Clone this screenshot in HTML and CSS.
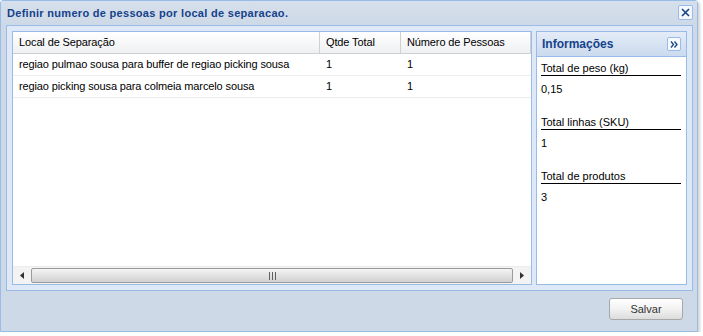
FILE: index.html
```html
<!DOCTYPE html>
<html>
<head>
<meta charset="utf-8">
<link rel="stylesheet" href="styles.css">
</head>
<body>
<div class="window">
  <div class="titlebar">
    <span class="title">Definir numero de pessoas por local de separacao.</span>
    <span class="close"><svg width="9" height="9" viewBox="0 0 9 9"><path d="M1 1L8 8M8 1L1 8" stroke="#15428b" stroke-width="1.6"/></svg></span>
  </div>
  <div class="frame">
    <div class="grid">
      <div class="ghead">
        <div class="c c1">Local de Separação</div>
        <div class="c c2">Qtde Total</div>
        <div class="c c3">Número de Pessoas</div>
      </div>
      <div class="gbody">
        <div class="row">
          <div class="c c1">regiao pulmao sousa para buffer de regiao picking sousa</div>
          <div class="c c2">1</div>
          <div class="c c3">1</div>
        </div>
        <div class="row">
          <div class="c c1">regiao picking sousa para colmeia marcelo sousa</div>
          <div class="c c2">1</div>
          <div class="c c3">1</div>
        </div>
      </div>
      <div class="hscroll">
        <div class="arrow"><svg width="4" height="7" viewBox="0 0 4 7"><path d="M4 0L0 3.5L4 7Z" fill="#333"/></svg></div>
        <div class="thumb"><span class="grip"></span></div>
        <div class="arrow"><svg width="4" height="7" viewBox="0 0 4 7"><path d="M0 0L4 3.5L0 7Z" fill="#333"/></svg></div>
      </div>
    </div>
    <div class="info">
      <div class="ihead">
        <span class="ititle">Informações</span>
        <span class="collapse"><svg width="8" height="7" viewBox="0 0 8 7"><path d="M1 0.5L3.5 3.5L1 6.5M4.5 0.5L7 3.5L4.5 6.5" fill="none" stroke="#15428b" stroke-width="1.3"/></svg></span>
      </div>
      <div class="ibody">
        <div class="field">
          <div class="label">Total de peso (kg)</div>
          <div class="value">0,15</div>
        </div>
        <div class="field">
          <div class="label">Total linhas (SKU)</div>
          <div class="value">1</div>
        </div>
        <div class="field">
          <div class="label">Total de produtos</div>
          <div class="value">3</div>
        </div>
      </div>
    </div>
  </div>
  <div class="footer">
    <button class="btn">Salvar</button>
  </div>
</div>
</body>
</html>
```
FILE: styles.css
```css
html, body {
  margin: 0;
  padding: 0;
  background: #ffffff;
}
body {
  font-family: "Liberation Sans", Arial, sans-serif;
  font-size: 11px;
  color: #000;
}
.window {
  width: 696px;
  height: 330px;
  border: 1px solid #99bbe8;
  border-radius: 3px 3px 0 0;
  background: #ced9e7;
  box-shadow: 2px 2px 3px rgba(0,0,0,0.18);
  display: flex;
  flex-direction: column;
}
.titlebar {
  height: 24px;
  display: flex;
  align-items: center;
  justify-content: space-between;
  padding: 0 4px 0 6px;
  background: linear-gradient(#d6e0ec, #ced9e7);
}
.title {
  font-weight: bold;
  color: #15428b;
  font-size: 11px;
  letter-spacing: 0.3px;
}
.close {
  width: 13px;
  height: 13px;
  border: 1px solid #99bbe8;
  border-radius: 2px;
  background: #f4f7fb;
  display: flex;
  align-items: center;
  justify-content: center;
  margin-top: -2px;
}
.frame {
  margin: 0 4px 0 5px;
  height: 254px;
  border: 1px solid #99bbe8;
  background: #dfe8f6;
  padding: 5px;
  display: flex;
  gap: 4px;
}
.grid {
  width: 518px;
  border: 1px solid #99bbe8;
  background: #fff;
  display: flex;
  flex-direction: column;
}
.ghead {
  display: flex;
  height: 21px;
  background: linear-gradient(#ffffff, #eff0f2);
  border-bottom: 1px solid #d0d0d0;
}
.ghead .c {
  border-right: 1px solid #d0d0d0;
  line-height: 21px;
}
.c {
  padding-left: 6px;
  box-sizing: border-box;
  white-space: nowrap;
  overflow: hidden;
  color: #000;
  letter-spacing: -0.12px;
}
.c1 { width: 307px; }
.c2 { width: 81px; }
.c3 { width: 130px; }
.gbody {
  flex: 1;
}
.row {
  display: flex;
  height: 21px;
  line-height: 20px;
  border-bottom: 1px solid #ededed;
}
.hscroll {
  height: 17px;
  display: flex;
  align-items: stretch;
  background: #f3f3f3;
  border-top: 1px solid #ececec;
}
.arrow {
  width: 18px;
  display: flex;
  align-items: center;
  justify-content: center;
}
.thumb {
  flex: 1;
  border: 1px solid #9a9a9a;
  border-radius: 2px;
  margin: 1px 0;
  background: linear-gradient(#f4f4f4, #e2e2e2 50%, #d2d2d2);
  display: flex;
  align-items: center;
  justify-content: center;
}
.grip {
  width: 7px;
  height: 8px;
  background: repeating-linear-gradient(90deg, #606060 0 1px, transparent 1px 3px);
}
.info {
  width: 150px;
  border: 1px solid #99bbe8;
  background: #fff;
  display: flex;
  flex-direction: column;
}
.ihead {
  height: 24px;
  display: flex;
  align-items: center;
  justify-content: space-between;
  padding: 0 5px 0 5px;
  background: linear-gradient(#e4ecf7, #cbdaee);
  border-bottom: 1px solid #99bbe8;
}
.ititle {
  font-weight: bold;
  font-size: 12px;
  color: #15428b;
}
.collapse {
  width: 12px;
  height: 12px;
  border: 1px solid #99bbe8;
  border-radius: 2px;
  background: #f6f9fd;
  display: flex;
  align-items: center;
  justify-content: center;
}
.ibody {
  padding: 4px 5px 0 4px;
}
.field {
  margin-bottom: 14px;
}
.label {
  border-bottom: 1px solid #000;
  padding-top: 1px;
  line-height: 13px;
}
.value {
  padding-top: 7px;
  line-height: 13px;
  height: 18px;
}
.footer {
  flex: 1;
  display: flex;
  align-items: flex-start;
  justify-content: flex-end;
  padding: 7px 14px 0 0;
}
.btn {
  width: 74px;
  height: 22px;
  border: 1px solid #a8a8a8;
  border-radius: 3px;
  background: linear-gradient(#ffffff, #f2f2f2 50%, #dcdcdc);
  font-family: "Liberation Sans", Arial, sans-serif;
  font-size: 11px;
  color: #333;
  padding: 0;
}
```
